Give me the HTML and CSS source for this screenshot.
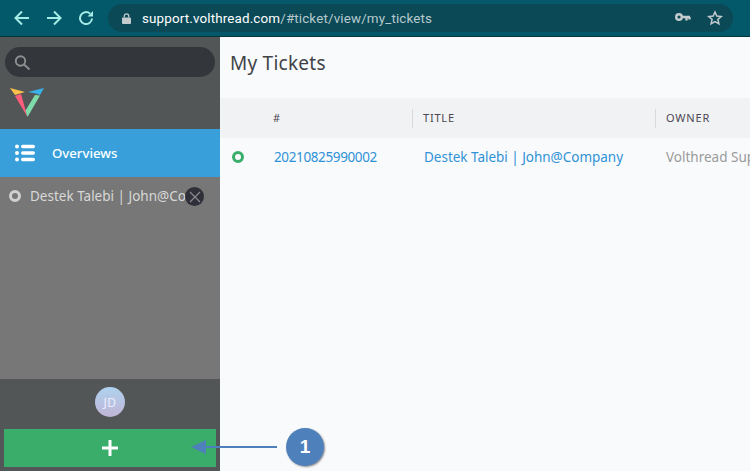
FILE: index.html
```html
<!DOCTYPE html>
<html lang="en">
<head>
<meta charset="utf-8">
<title>My Tickets</title>
<link rel="stylesheet" href="styles.css">
</head>
<body>
<div class="browser">
  <svg class="nav-icon" width="18" height="18" viewBox="0 0 18 18"><path d="M16 9H3M9 2.500 2.500 9 9 15.500" /></svg>
  <svg class="nav-icon" width="18" height="18" viewBox="0 0 18 18"><path d="M2 9h13M9 2.500 15.500 9 9 15.500" /></svg>
  <svg class="nav-icon" width="18" height="18" viewBox="0 0 18 18"><path d="M15 9.500A6 6 0 1 1 13 4.600" /><path class="fill" d="M10.500 7.500H16V2z" /></svg>
  <div class="omnibox">
    <svg class="lock" width="9" height="11" viewBox="0 0 10 12"><path d="M1 5h8a1 1 0 0 1 1 1v5a1 1 0 0 1-1 1H1a1 1 0 0 1-1-1V6a1 1 0 0 1 1-1z" /><path class="shackle" d="M2.500 5V3.300a2.500 2.500 0 0 1 5 0V5" /></svg>
    <span class="url"><span class="host">support.volthread.com</span>/#ticket/view/my_tickets</span>
    <svg class="key" width="16" height="10" viewBox="0 0 16 10"><circle cx="4" cy="4" r="2.800" /><path d="M6.500 4h8.500M11.500 4v3.500M14.500 4v2.500" /></svg>
    <svg class="star" width="16" height="16" viewBox="0 0 16 16"><path d="M8 2l1.800 4.100 4.500.4-3.400 2.900 1 4.400L8 11.500l-3.900 2.300 1-4.400L1.700 6.500l4.500-.4z" /></svg>
  </div>
</div>
<div class="app">
  <aside class="sidebar">
    <div class="side-top">
      <div class="search">
        <svg width="16" height="16" viewBox="0 0 16 16"><circle cx="5.500" cy="7" r="4.700" /><path d="M9 10.500l5.500 5" /></svg>
      </div>
      <svg class="logo" width="36" height="31" viewBox="0 0 36 31">
        <path fill="#fdc049" d="M0 1l15 4-10 3z" />
        <path fill="#ff5d7c" d="M5 9l6-2 6.500 23z" />
        <path fill="#7fdcaa" d="M17.500 30l-2-6.500L25 8l5 .5z" />
        <path fill="#38b1ea" d="M18 5l16-4-4 7-4-1.500z" />
      </svg>
    </div>
    <div class="overviews">
      <svg width="22" height="18" viewBox="0 0 22 18"><circle cx="2" cy="2.500" r="2" /><circle cx="2" cy="9" r="2" /><circle cx="2" cy="15.500" r="2" /><rect x="6" y=".800" width="14" height="3.500" rx="1.700" /><rect x="6" y="7.200" width="14" height="3.500" rx="1.700" /><rect x="6" y="13.700" width="14" height="3.500" rx="1.700" /></svg>
      <span>Overviews</span>
    </div>
    <div class="side-tabs">
      <div class="tab">
        <span class="ring"></span>
        <span class="tab-title">Destek Talebi | John@Company</span>
        <span class="tab-close"><svg width="12" height="12" viewBox="0 0 12 12"><path d="M1 1l10 10M11 1 1 11" /></svg></span>
      </div>
    </div>
    <div class="side-bottom">
      <div class="avatar">JD</div>
      <div class="add"><svg width="18" height="18" viewBox="0 0 18 18"><path d="M9 1v16M1 9h16" /></svg></div>
    </div>
  </aside>
  <main class="content">
    <h1>My Tickets</h1>
    <div class="thead">
      <div class="c-status"></div>
      <div class="c-num">#</div>
      <div class="c-title">TITLE</div>
      <div class="c-owner">OWNER</div>
    </div>
    <div class="trow">
      <div class="c-status"><span class="ring green"></span></div>
      <div class="c-num link">20210825990002</div>
      <div class="c-title link">Destek Talebi | John@Company</div>
      <div class="c-owner muted">Volthread Support</div>
    </div>
  </main>
</div>
<svg class="arrow" width="88" height="16" viewBox="0 0 88 16"><path class="head" d="M0 8 15 1v14z" /><path class="shaft" d="M14 8h72" /></svg>
<div class="callout">1</div>
</body>
</html>
```
FILE: styles.css
```css
html, body { margin: 0; padding: 0; }
body {
  width: 750px; height: 471px; overflow: hidden; position: relative;
  font-family: "Noto Sans", "Open Sans", sans-serif; background: #f9fafc;
}
.browser {
  height: 36px; background: #03596a; border-bottom: 1px solid #06343f;
  display: flex; align-items: center; padding-left: 13px; gap: 14px;
}
.nav-icon { fill: none; stroke: #a5ebe6; stroke-width: 2; flex: none; }
.nav-icon .fill { fill: #a5ebe6; stroke: none; }
.omnibox {
  margin-left: -1px; flex: 1; height: 28px; margin-right: 17px; border-radius: 14px;
  background: #0b4957; display: flex; align-items: center; padding-left: 14px;
}
.lock { fill: #c3cbce; flex: none; }
.lock .shackle { fill: none; stroke: #c3cbce; stroke-width: 1.400; }
.url { margin-left: 11px; font: 13.4px "Roboto", sans-serif; color: #b7c9cd; flex: 1; letter-spacing: .15px; }
.host { color: #fff; }
.key { fill: none; stroke: #c3cbce; stroke-width: 2.400; margin-right: 16px; }
.star { fill: none; stroke: #c3cbce; stroke-width: 1.500; margin-right: 10px; }

.app { display: flex; height: 434px; }
.sidebar { width: 220px; flex: none; display: flex; flex-direction: column; background: #777; }
.side-top { height: 92px; background: #535657; padding: 10px 5px 0; box-sizing: border-box; }
.search {
  width: 210px; height: 30px; border-radius: 15px; background: #33363a;
  display: flex; align-items: center; padding-left: 10px; box-sizing: border-box;
}
.search svg { fill: none; stroke: #8e9192; stroke-width: 1.900; }
.logo { display: block; margin: 10px 0 0 5px; }
.overviews {
  height: 48px; background: #389fdb; color: #fff; display: flex; align-items: center;
  padding-left: 15px; gap: 15px; font-size: 13.200px; font-weight: 500;
}
.overviews svg { fill: #fff; }
.side-tabs { flex: 1; }
.tab { height: 38px; display: flex; align-items: center; padding-left: 9px; position: relative; overflow: hidden; }
.ring {
  width: 12px; height: 12px; border-radius: 50%; border: 3px solid #d0d0d0;
  box-sizing: border-box; flex: none; display: block;
}
.ring.green { border-color: #39ad69; }
.tab-title { margin-left: 9px; width: 163px; overflow: hidden; color: #d8d8d8; font-size: 13.500px; white-space: nowrap; }
.tab-close {
  position: absolute; left: 185px; top: 10px; width: 19px; height: 19px; border-radius: 50%;
  background: #2e2f38; display: flex; align-items: center; justify-content: center;
}
.tab-close svg { fill: none; stroke: #8a8a90; stroke-width: 1.200; }
.side-bottom { height: 92px; background: #535657; display: flex; flex-direction: column; align-items: center; }
.avatar {
  width: 30px; height: 30px; margin-top: 8px; border-radius: 50%;
  background: linear-gradient(#aed2ee, #c1b5d6); color: #eef; font-size: 12px; letter-spacing: .5px;
  display: flex; align-items: center; justify-content: center;
}
.add {
  width: 212px; height: 38px; margin-top: 12px; background: #39ad69;
  display: flex; align-items: center; justify-content: center;
}
.add svg { stroke: #fff; stroke-width: 3; fill: none; }

.content { flex: 1; min-width: 0; overflow: hidden; }
h1 { margin: 0; height: 61px; padding: 13px 0 0 10px; box-sizing: border-box; font-size: 19px; line-height: 26px; font-weight: 400; color: #3f4347; letter-spacing: .25px; }
.thead, .trow { display: flex; width: 560px; align-items: center; }
.thead { height: 40px; background: #f1f2f3; font-size: 11px; letter-spacing: .8px; color: #4b4652; }
.trow { height: 38px; font-size: 13.500px; }
.c-status { width: 53px; flex: none; display: flex; padding-left: 12px; box-sizing: border-box; }
.c-num { width: 139px; flex: none; box-sizing: border-box; }
.c-title { width: 243px; flex: none; box-sizing: border-box; }
.c-owner { flex: 1; box-sizing: border-box; white-space: nowrap; }
.thead .c-num { line-height: 17px; height: 19px; }
.thead .c-title, .thead .c-owner { border-left: 1px solid #d8d9da; height: 19px; line-height: 17px; padding-left: 10px; }
.link { color: #2f92d6; }
.muted { color: #9a9a9a; }
.trow .c-num { padding-left: 1px; letter-spacing: -.37px; }
.trow .c-title { padding-left: 12px; letter-spacing: -.02px; }
.trow .c-owner { padding-left: 11px; }

.arrow { position: absolute; left: 191px; top: 439px; }
.arrow .head { fill: #4e81bb; }
.arrow .shaft { stroke: #4e81bb; stroke-width: 2; fill: none; }
.callout {
  position: absolute; left: 286px; top: 428px; width: 38px; height: 38px; border-radius: 50%;
  background: #4e81bb; color: #fff; font: bold 19px "Liberation Sans", sans-serif;
  display: flex; align-items: center; justify-content: center; box-shadow: 1px 1px 2px rgba(0,0,0,.45);
}
```
